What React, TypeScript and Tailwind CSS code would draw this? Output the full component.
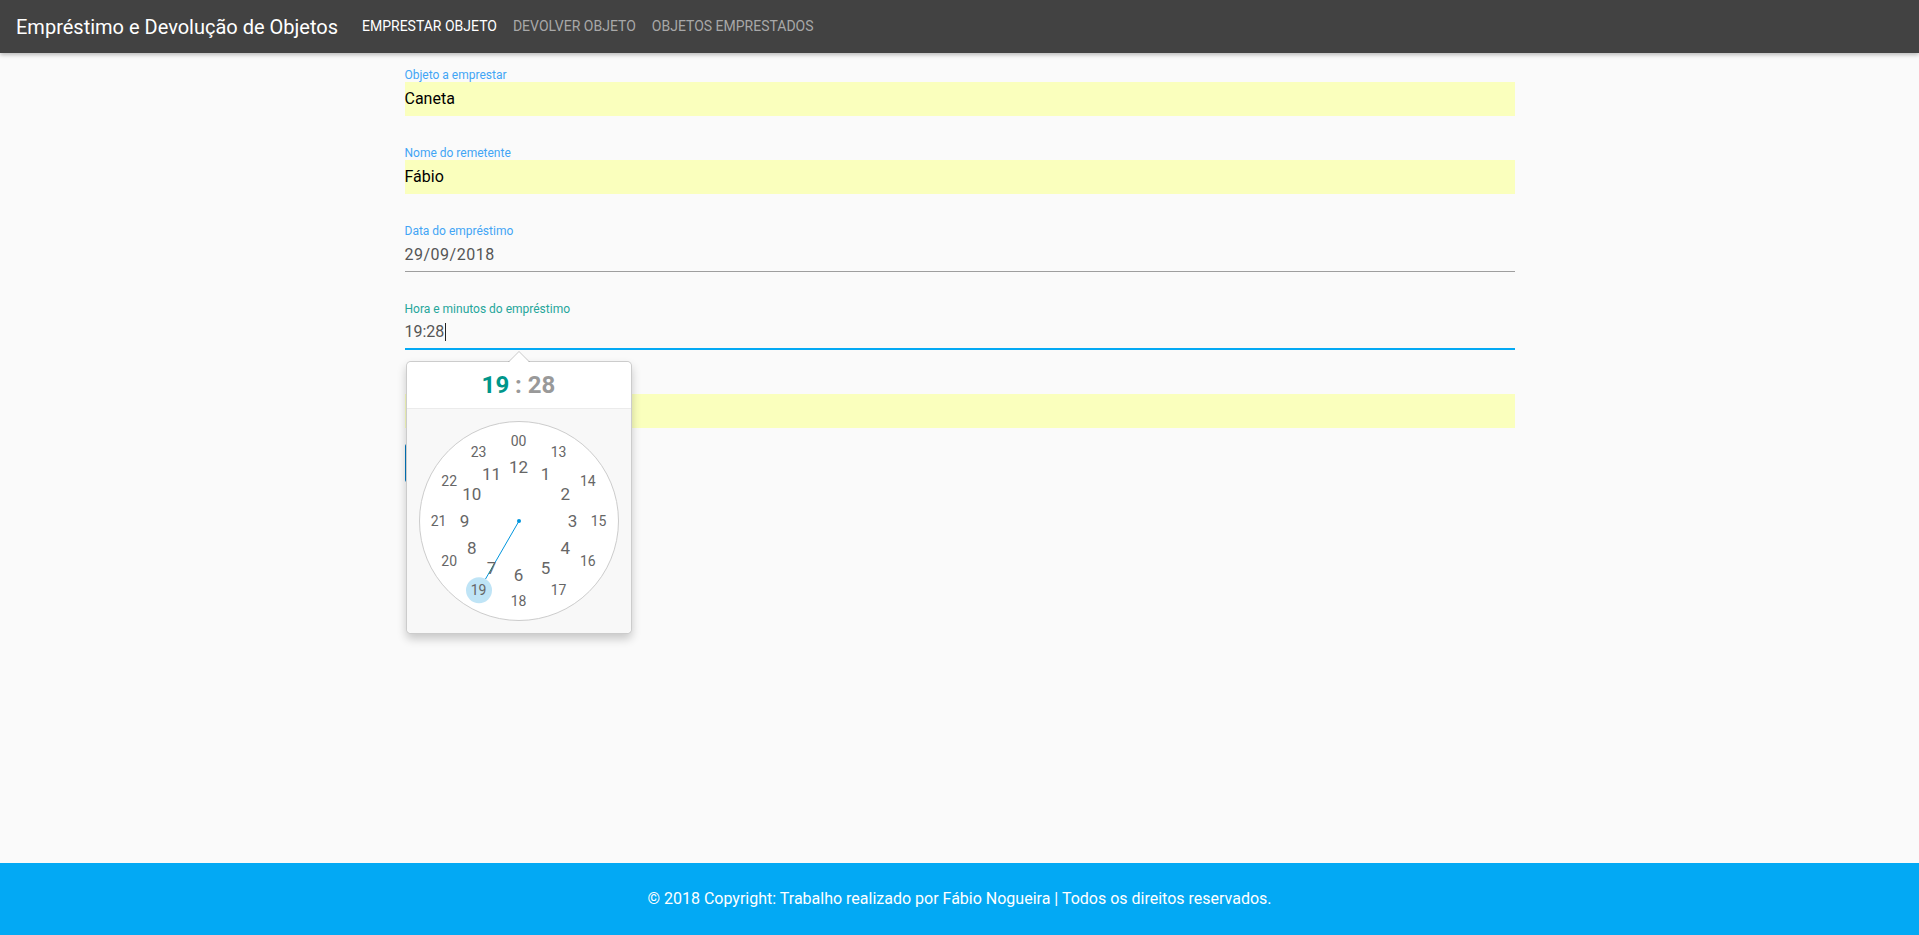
import React from "react";

const font = { fontFamily: "Roboto, 'Noto Sans', sans-serif" };

interface FieldProps {
  label: string;
  value: string;
  filled?: boolean;
  focused?: boolean;
}

const Field = ({ label, value, filled, focused }: FieldProps) => {
  return (
    <div className="mb-[30px]">
      <label
        className={
          "block text-[12px] leading-[14px] " +
          (focused ? "text-[#26a69a]" : "text-[#42a5f5]")
        }
      >
        {label}
      </label>
      {filled ? (
        <div className="flex h-[34px] items-center bg-[#faffbd] text-[16px] text-black">
          {value}
        </div>
      ) : focused ? (
        <div className="flex h-[34px] items-center border-b-2 border-[#03a9f4] text-[16px] text-[#555]">
          {value}
          <span className="ml-[1px] inline-block h-[18px] w-px bg-[#222]" />
        </div>
      ) : (
        <div className="flex h-[34px] items-center border-b border-[#9e9e9e] text-[16px] tracking-[0.5px] text-[#555]">
          {value}
        </div>
      )}
    </div>
  );
};

const ticks = Array.from({ length: 24 }, (_, i) => {
  const radian = (i / 6) * Math.PI;
  const inner = i > 0 && i < 13;
  const radius = inner ? 54 : 80;
  return {
    text: i === 0 ? "00" : String(i),
    inner,
    left: 100 + Math.sin(radian) * radius - 13,
    top: 100 - Math.cos(radian) * radius - 13,
  };
});

const ClockPicker = () => {
  const radian = (19 / 6) * Math.PI;
  const cx = 100 + Math.sin(radian) * 80;
  const cy = 100 - Math.cos(radian) * 80;
  const hx = 100 + Math.sin(radian) * 67;
  const hy = 100 - Math.cos(radian) * 67;
  return (
    <div className="absolute left-[1px] top-[59px] z-10 w-[226px] rounded-[5px] border border-[rgba(0,0,0,0.2)] bg-white shadow-[0_5px_10px_rgba(0,0,0,0.2)]">
      {/* arrow */}
      <div className="absolute left-1/2 top-[-11px] h-0 w-0 -translate-x-1/2 border-x-[11px] border-b-[11px] border-x-transparent border-b-[rgba(0,0,0,0.2)]" />
      <div className="absolute left-1/2 top-[-10px] h-0 w-0 -translate-x-1/2 border-x-[10px] border-b-[10px] border-x-transparent border-b-white" />
      <div className="rounded-t-[5px] border-b border-[#ebebeb] bg-white py-[8px] text-center text-[24px] font-bold leading-[30px] text-[#999]">
        <span className="text-[#00968a]">19</span> : 28
      </div>
      <div className="rounded-b-[5px] bg-[#f8f8f8] p-[12px]">
        <div className="relative h-[200px] w-[200px] rounded-full border border-[#ccc] bg-white">
          <svg className="absolute left-[-1px] top-[-1px]" width="200" height="200">
            <line x1="100" y1="100" x2={hx} y2={hy} stroke="#0095dd" strokeWidth="1" />
            <circle cx={cx} cy={cy} r="13" fill="rgba(0,149,221,0.25)" />
            <circle cx="100" cy="100" r="2" fill="#0095dd" />
          </svg>
          {ticks.map((t) => (
            <div
              key={t.text}
              className={
                "absolute h-[26px] w-[26px] text-center leading-[26px] text-[#666] " +
                (t.inner ? "text-[17px]" : "text-[14px]")
              }
              style={{ left: t.left - 1, top: t.top - 1 }}
            >
              {t.text}
            </div>
          ))}
        </div>
      </div>
    </div>
  );
};

export default function App() {
  return (
    <div className="flex min-h-screen flex-col bg-[#fafafa]" style={font}>
      <nav className="z-10 flex h-[53px] items-center bg-[#424242] px-4 shadow-[0_2px_4px_rgba(0,0,0,0.25)]">
        <span className="text-[20px] text-white">Empréstimo e Devolução de Objetos</span>
        <ul className="ml-6 flex gap-4 text-[14px]">
          <li className="text-white">EMPRESTAR OBJETO</li>
          <li className="text-[#a8a8a8]">DEVOLVER OBJETO</li>
          <li className="text-[#a8a8a8]">OBJETOS EMPRESTADOS</li>
        </ul>
      </nav>

      <main className="flex-1 pt-[15px]">
        <div className="mx-auto w-[1110px]">
          <Field label="Objeto a emprestar" value="Caneta" filled />
          <Field label="Nome do remetente" value="Fábio" filled />
          <Field label="Data do empréstimo" value="29/09/2018" />
          <div className="relative">
            <Field label="Hora e minutos do empréstimo" value="19:28" focused />
            <ClockPicker />
          </div>
          <div className="mb-[16px]">
            <label className="block pl-[4px] text-[12px] leading-[14px] text-[#42a5f5]">
              Nome do destinatário
            </label>
            <div className="flex h-[34px] items-center bg-[#faffbd] pl-[4px] text-[16px] text-black">
              Maria
            </div>
          </div>
          <button className="h-[38px] w-[130px] rounded-[2px] bg-[#0277bd] text-[14px] text-white">
            EMPRESTAR
          </button>
        </div>
      </main>

      <footer className="flex h-[72px] items-center justify-center bg-[#03a9f4] text-[16px] text-white">
        © 2018 Copyright: Trabalho realizado por Fábio Nogueira | Todos os direitos reservados.
      </footer>
    </div>
  );
}
